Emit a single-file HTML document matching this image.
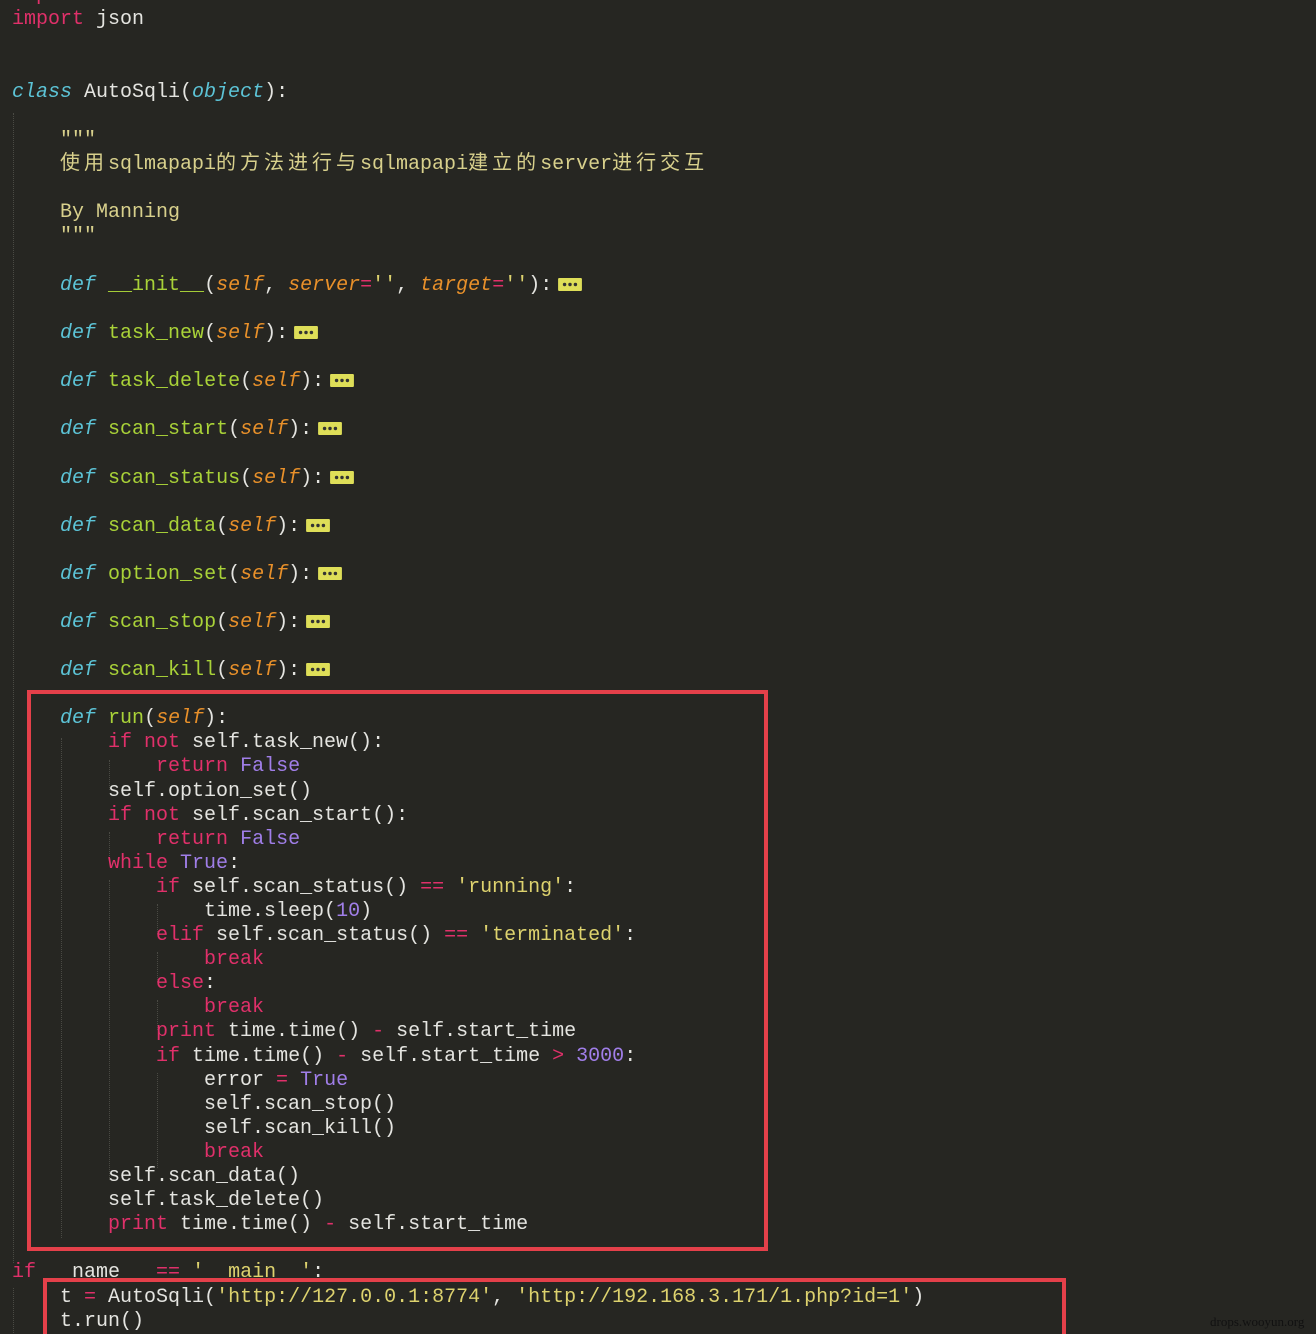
<!DOCTYPE html>
<html><head><meta charset="utf-8">
<style>
html,body{margin:0;padding:0;width:1316px;height:1334px;overflow:hidden;}
body{background:#262622;position:relative;
font-family:"Liberation Mono","Noto Sans CJK SC",monospace;font-size:20px;color:#e4e4e0;}
.w{position:absolute;left:0;top:3px;width:1316px;height:1334px;}
.l{position:absolute;left:12px;height:24px;line-height:24px;white-space:pre;}
.k{color:#e0306a}
.d{color:#5cc3d6;font-style:italic}
.s{color:#e8902a;font-style:italic}
.f{color:#a9d238}
.y{color:#ddd26e}
.p{color:#a07ee8}
.doc{color:#d8d08c}
.c{letter-spacing:4px}
.fold{display:inline-block;width:24px;height:13px;vertical-align:-1px;margin-left:6px}
.box{position:absolute;border:4px solid #e4404a;box-sizing:border-box}
.g{position:absolute;width:0;border-left:1px dotted #4a4a44}
.wm{position:absolute;left:1210px;top:1314px;font-family:"Liberation Serif",serif;font-size:13px;color:#111;}
</style></head><body>
<div class="w">
<div class="g" style="left:13px;top:110px;height:1150px"></div>
<div class="g" style="left:61px;top:735px;height:500px"></div>
<div class="g" style="left:109px;top:757px;height:30px"></div>
<div class="g" style="left:109px;top:829px;height:30px"></div>
<div class="g" style="left:109px;top:877px;height:300px"></div>
<div class="g" style="left:157px;top:901px;height:30px"></div>
<div class="g" style="left:157px;top:949px;height:30px"></div>
<div class="g" style="left:157px;top:997px;height:30px"></div>
<div class="g" style="left:157px;top:1070px;height:95px"></div>
<div class="g" style="left:13px;top:1285px;height:49px"></div>

<div class="l" style="top:-19px"><span class="k">import</span> time</div>
<div class="l" style="top:5px"><span class="k">import</span> json</div>
<div class="l" style="top:78px"><span class="d">class</span> AutoSqli(<span class="d">object</span>):</div>
<div class="l doc" style="top:126px">    """</div>
<div class="l doc" style="top:150px">    <span class="c">使用</span>sqlmapapi<span class="c">的方法进行与</span>sqlmapapi<span class="c">建立的</span>server<span class="c">进行交互</span></div>
<div class="l doc" style="top:198px">    By Manning</div>
<div class="l doc" style="top:222px">    """</div>
<div class="l" style="top:271px">    <span class="d">def</span> <span class="f">__init__</span>(<span class="s">self</span>, <span class="s">server</span><span class="k">=</span><span class="y">''</span>, <span class="s">target</span><span class="k">=</span><span class="y">''</span>):<svg class="fold" viewBox="0 0 22 12"><rect width="22" height="12" rx="1" fill="#dede58"/><circle cx="6" cy="6" r="1.6" fill="#333"/><circle cx="11" cy="6" r="1.6" fill="#333"/><circle cx="16" cy="6" r="1.6" fill="#333"/></svg></div>
<div class="l" style="top:319px">    <span class="d">def</span> <span class="f">task_new</span>(<span class="s">self</span>):<svg class="fold" viewBox="0 0 22 12"><rect width="22" height="12" rx="1" fill="#dede58"/><circle cx="6" cy="6" r="1.6" fill="#333"/><circle cx="11" cy="6" r="1.6" fill="#333"/><circle cx="16" cy="6" r="1.6" fill="#333"/></svg></div>
<div class="l" style="top:367px">    <span class="d">def</span> <span class="f">task_delete</span>(<span class="s">self</span>):<svg class="fold" viewBox="0 0 22 12"><rect width="22" height="12" rx="1" fill="#dede58"/><circle cx="6" cy="6" r="1.6" fill="#333"/><circle cx="11" cy="6" r="1.6" fill="#333"/><circle cx="16" cy="6" r="1.6" fill="#333"/></svg></div>
<div class="l" style="top:415px">    <span class="d">def</span> <span class="f">scan_start</span>(<span class="s">self</span>):<svg class="fold" viewBox="0 0 22 12"><rect width="22" height="12" rx="1" fill="#dede58"/><circle cx="6" cy="6" r="1.6" fill="#333"/><circle cx="11" cy="6" r="1.6" fill="#333"/><circle cx="16" cy="6" r="1.6" fill="#333"/></svg></div>
<div class="l" style="top:464px">    <span class="d">def</span> <span class="f">scan_status</span>(<span class="s">self</span>):<svg class="fold" viewBox="0 0 22 12"><rect width="22" height="12" rx="1" fill="#dede58"/><circle cx="6" cy="6" r="1.6" fill="#333"/><circle cx="11" cy="6" r="1.6" fill="#333"/><circle cx="16" cy="6" r="1.6" fill="#333"/></svg></div>
<div class="l" style="top:512px">    <span class="d">def</span> <span class="f">scan_data</span>(<span class="s">self</span>):<svg class="fold" viewBox="0 0 22 12"><rect width="22" height="12" rx="1" fill="#dede58"/><circle cx="6" cy="6" r="1.6" fill="#333"/><circle cx="11" cy="6" r="1.6" fill="#333"/><circle cx="16" cy="6" r="1.6" fill="#333"/></svg></div>
<div class="l" style="top:560px">    <span class="d">def</span> <span class="f">option_set</span>(<span class="s">self</span>):<svg class="fold" viewBox="0 0 22 12"><rect width="22" height="12" rx="1" fill="#dede58"/><circle cx="6" cy="6" r="1.6" fill="#333"/><circle cx="11" cy="6" r="1.6" fill="#333"/><circle cx="16" cy="6" r="1.6" fill="#333"/></svg></div>
<div class="l" style="top:608px">    <span class="d">def</span> <span class="f">scan_stop</span>(<span class="s">self</span>):<svg class="fold" viewBox="0 0 22 12"><rect width="22" height="12" rx="1" fill="#dede58"/><circle cx="6" cy="6" r="1.6" fill="#333"/><circle cx="11" cy="6" r="1.6" fill="#333"/><circle cx="16" cy="6" r="1.6" fill="#333"/></svg></div>
<div class="l" style="top:656px">    <span class="d">def</span> <span class="f">scan_kill</span>(<span class="s">self</span>):<svg class="fold" viewBox="0 0 22 12"><rect width="22" height="12" rx="1" fill="#dede58"/><circle cx="6" cy="6" r="1.6" fill="#333"/><circle cx="11" cy="6" r="1.6" fill="#333"/><circle cx="16" cy="6" r="1.6" fill="#333"/></svg></div>
<div class="l" style="top:704px">    <span class="d">def</span> <span class="f">run</span>(<span class="s">self</span>):</div>
<div class="l" style="top:728px">        <span class="k">if not</span> self.task_new():</div>
<div class="l" style="top:752px">            <span class="k">return</span> <span class="p">False</span></div>
<div class="l" style="top:777px">        self.option_set()</div>
<div class="l" style="top:801px">        <span class="k">if not</span> self.scan_start():</div>
<div class="l" style="top:825px">            <span class="k">return</span> <span class="p">False</span></div>
<div class="l" style="top:849px">        <span class="k">while</span> <span class="p">True</span>:</div>
<div class="l" style="top:873px">            <span class="k">if</span> self.scan_status() <span class="k">==</span> <span class="y">'running'</span>:</div>
<div class="l" style="top:897px">                time.sleep(<span class="p">10</span>)</div>
<div class="l" style="top:921px">            <span class="k">elif</span> self.scan_status() <span class="k">==</span> <span class="y">'terminated'</span>:</div>
<div class="l" style="top:945px">                <span class="k">break</span></div>
<div class="l" style="top:969px">            <span class="k">else</span>:</div>
<div class="l" style="top:993px">                <span class="k">break</span></div>
<div class="l" style="top:1017px">            <span class="k">print</span> time.time() <span class="k">-</span> self.start_time</div>
<div class="l" style="top:1042px">            <span class="k">if</span> time.time() <span class="k">-</span> self.start_time <span class="k">&gt;</span> <span class="p">3000</span>:</div>
<div class="l" style="top:1066px">                error <span class="k">=</span> <span class="p">True</span></div>
<div class="l" style="top:1090px">                self.scan_stop()</div>
<div class="l" style="top:1114px">                self.scan_kill()</div>
<div class="l" style="top:1138px">                <span class="k">break</span></div>
<div class="l" style="top:1162px">        self.scan_data()</div>
<div class="l" style="top:1186px">        self.task_delete()</div>
<div class="l" style="top:1210px">        <span class="k">print</span> time.time() <span class="k">-</span> self.start_time</div>
<div class="l" style="top:1258px"><span class="k">if</span> __name__ <span class="k">==</span> <span class="y">'__main__'</span>:</div>
<div class="l" style="top:1283px">    t <span class="k">=</span> AutoSqli(<span class="y">'http://127.0.0.1:8774'</span>, <span class="y">'http://192.168.3.171/1.php?id=1'</span>)</div>
<div class="l" style="top:1307px">    t.run()</div>
</div>
<div class="box" style="left:27px;top:690px;width:741px;height:561px"></div>
<div class="box" style="left:43px;top:1278px;width:1023px;height:56px;border-bottom:none"></div>
<div class="wm">drops.wooyun.org</div>
</body></html>
